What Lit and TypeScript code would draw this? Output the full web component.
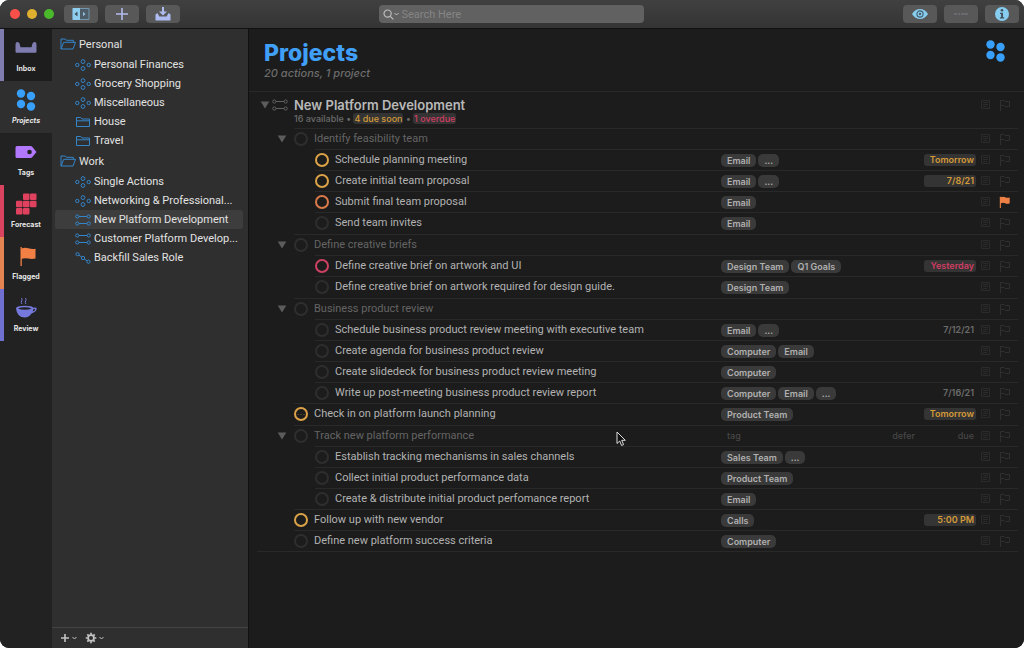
import { LitElement, html, css, svg, nothing } from "lit";
import { customElement, property } from "lit/decorators.js";

type Tone = "soon" | "late" | "";

interface Task {
  title: string;
  level: 1 | 2;
  group?: boolean;
  ring?: "amber" | "orange" | "red";
  tags?: string[];
  due?: string;
  tone?: Tone;
  flagged?: boolean;
  repeats?: boolean;
  hovered?: boolean;
}

const TASKS: Task[] = [
  { title: "Identify feasibility team", level: 1, group: true },
  { title: "Schedule planning meeting", level: 2, ring: "amber", tags: ["Email", "..."], due: "Tomorrow", tone: "soon" },
  { title: "Create initial team proposal", level: 2, ring: "amber", tags: ["Email", "..."], due: "7/8/21", tone: "soon" },
  { title: "Submit final team proposal", level: 2, ring: "orange", tags: ["Email"], flagged: true },
  { title: "Send team invites", level: 2, tags: ["Email"] },
  { title: "Define creative briefs", level: 1, group: true },
  { title: "Define creative brief on artwork and UI", level: 2, ring: "red", tags: ["Design Team", "Q1 Goals"], due: "Yesterday", tone: "late" },
  { title: "Define creative brief on artwork required for design guide.", level: 2, tags: ["Design Team"] },
  { title: "Business product review", level: 1, group: true },
  { title: "Schedule business product review meeting with executive team", level: 2, tags: ["Email", "..."], due: "7/12/21", tone: "" },
  { title: "Create agenda for business product review", level: 2, tags: ["Computer", "Email"] },
  { title: "Create slidedeck for business product review meeting", level: 2, tags: ["Computer"] },
  { title: "Write up post-meeting business product review report", level: 2, tags: ["Computer", "Email", "..."], due: "7/16/21", tone: "" },
  { title: "Check in on platform launch planning", level: 1, ring: "amber", repeats: true, tags: ["Product Team"], due: "Tomorrow", tone: "soon" },
  { title: "Track new platform performance", level: 1, group: true, hovered: true },
  { title: "Establish tracking mechanisms in sales channels", level: 2, tags: ["Sales Team", "..."] },
  { title: "Collect initial product performance data", level: 2, tags: ["Product Team"] },
  { title: "Create & distribute initial product perfomance report", level: 2, tags: ["Email"] },
  { title: "Follow up with new vendor", level: 1, ring: "amber", tags: ["Calls"], due: "5:00 PM", tone: "soon" },
  { title: "Define new platform success criteria", level: 1, tags: ["Computer"] },
];

const FOLDERS = [
  {
    name: "Personal",
    items: [
      ["single", "Personal Finances"],
      ["single", "Grocery Shopping"],
      ["single", "Miscellaneous"],
      ["folder", "House"],
      ["folder", "Travel"],
    ],
  },
  {
    name: "Work",
    items: [
      ["single", "Single Actions"],
      ["single", "Networking & Professional..."],
      ["parallel", "New Platform Development"],
      ["parallel", "Customer Platform Develop..."],
      ["sequential", "Backfill Sales Role"],
    ],
  },
];

const PERSPECTIVES = ["Inbox", "Projects", "Tags", "Forecast", "Flagged", "Review"];

const dots = svg`<circle cx="5.500" cy="4.500" r="4.200"/><circle cx="15.500" cy="7" r="4.200"/><circle cx="5.500" cy="15" r="4.200"/><circle cx="15.500" cy="17.500" r="4.200"/>`;

const railIcons: Record<string, unknown> = {
  Inbox: html`<svg width="22" height="22" viewBox="0 0 22 22" fill="#7f7db0"><path d="M.5 8q0-3 2-3 1.500 0 2 1.600l1 3.600h11l1-3.600q.5-1.600 2-1.600 2 0 2 3v6.500q0 1.200-1.200 1.200H1.700q-1.200 0-1.200-1.200z"/></svg>`,
  Projects: html`<svg width="22" height="22" viewBox="0 0 21 22" fill="#38a0fb">${dots}</svg>`,
  Tags: html`<svg width="22" height="22" viewBox="0 0 22 22" fill="#b178fb"><path fill-rule="evenodd" d="M2 5h13.500q1 0 1.700.7L21.500 11l-4.300 5.300q-.7.700-1.700.7H2Q.5 17 .5 15.500v-9Q.5 5 2 5zm12.500 3.700a2.300 2.300 0 1 0 0 4.600 2.300 2.300 0 0 0 0-4.600z"/></svg>`,
  Forecast: html`<svg width="22" height="22" viewBox="0 0 22 22" fill="#e0415f">${[[8, 0.5], [15, 0.5], [1, 7.7], [8, 7.7], [15, 7.7], [1, 15], [8, 15]].map(
    ([x, y]) => svg`<rect x=${x} y=${y} width="6.500" height="6.600" rx="1"/>`,
  )}</svg>`,
  Flagged: html`<svg width="22" height="22" viewBox="0 0 22 22" fill="#f28044"><path d="M5.500 2h1.300v19H5.500zM6.800 3.500q3-1.300 6.500-.2t7.200.5v9.800q-3.700.9-7.200 0t-6.500.2z"/></svg>`,
  Review: html`<svg width="22" height="22" viewBox="0 0 22 22" fill="#7579dc"><path fill-rule="evenodd" d="M1 11.500q0-2.800 8.800-2.800 8 0 8.500 2 3.600-.7 3.400 1.300-.3 2.600-5.200 4.600Q14 20.500 9.800 20.500 2 20.500 1 11.500zm2 .1q2.500 1.200 6.800 1.200t6.700-1.200q-2.200-1.300-6.700-1.300T3 11.600zm15.300.7-.6 2.300q2.600-1.300 2.600-2.200 0-.7-2-.1z"/><path d="M7 7Q5.600 5.500 6.600 4T6.500 1M11 7q-1.400-1.500-.4-3T10.500 1" fill="none" stroke="#7579dc"/></svg>`,
};

const folderIcon = html`<svg width="16" height="12" viewBox="0 0 16 12" class="line"><path d="M1.500 10.500v-9h4.200l1.200 1.500h7.600v7.500zM1.500 4.800h13"/></svg>`;
const openFolderIcon = html`<svg width="16" height="12" viewBox="0 0 16 12" class="line"><path d="M1 11V1h4.200l1.200 1.300h6.900v2M1 11 3.700 4.300h11.800L13 11z"/></svg>`;

const treeIcons: Record<string, unknown> = {
  folder: folderIcon,
  single: html`<svg width="16" height="12" viewBox="0 0 16 12" class="line"><circle cx="2.300" cy="6" r="1.700"/><circle cx="13.700" cy="6" r="1.700"/><circle cx="8" cy="2.600" r="1.900"/><circle cx="8" cy="9.500" r="1.900"/></svg>`,
  parallel: html`<svg width="16" height="12" viewBox="0 0 16 12" class="line"><circle cx="2.300" cy="2.500" r="1.600"/><circle cx="13.700" cy="2.500" r="1.600"/><circle cx="2.300" cy="9.500" r="1.600"/><circle cx="13.700" cy="9.500" r="1.600"/><path d="M4 2.500h8M4 9.500h8"/></svg>`,
  sequential: html`<svg width="16" height="12" viewBox="0 0 16 12" class="line"><circle cx="2.500" cy="2.200" r="1.600"/><circle cx="8" cy="6" r="1.700"/><circle cx="13.500" cy="9.700" r="1.600"/><path d="m3.900 3.100 2.700 1.900M9.400 7l2.700 1.800"/></svg>`,
};

const caret = html`<svg width="5" height="4" viewBox="0 0 5 4" fill="none" stroke="currentColor"><path d="M.5 1 2.500 3l2-2"/></svg>`;

const noteIcon = html`<svg width="10" height="10" viewBox="0 0 10 10" fill="none" stroke="#2b2b2b"><path d="M.5.500h8v8h-8zM2 2.500h5M2 4.500h5M2 6.500h4"/></svg>`;
const flagIcon = html`<svg width="12" height="12" viewBox="0 0 12 12" fill="none" stroke="#2f2f2f"><path d="M1.500 12V1.500h3.500l1 1h4.500v5H6l-1-1H1.500"/></svg>`;
const flagOnIcon = html`<svg width="12" height="12" viewBox="0 0 12 12" fill="#ee8045"><path d="M.8.800h1.100V12H.8zM1.900 1.200q2.200-.9 4.300.1t4.500.2v5.800q-2.400 1-4.500 0t-4.300 0z"/></svg>`;
const triangle = html`<svg width="10" height="8" viewBox="0 0 10 8" fill="#5c5c5c"><path d="M.7.500h8.600L5 7.500z"/></svg>`;

@customElement("app-toolbar")
export class AppToolbar extends LitElement {
  static styles = css`
    :host {
      display: grid;
      grid-template-columns: 1fr minmax(120px, 265px) 1fr;
      align-items: center;
      gap: 12px;
      height: 28px;
      padding: 0 5px 0 3px;
      background: linear-gradient(#404040, #343434);
      border-bottom: 1px solid #111111;
    }
    .side { display: flex; align-items: center; gap: 7px; }
    .right { justify-content: flex-end; }
    .lights { display: flex; gap: 7px; margin: 0 3px 0 7px; }
    .light { width: 10px; height: 10px; border-radius: 50%; }
    .close { background: #fb5049; }
    .min { background: #e0af2f; }
    .max { background: #4ab92c; }
    button {
      display: grid;
      place-items: center;
      width: 34px;
      height: 18px;
      padding: 0;
      border: 0;
      border-radius: 4px;
      background: #585858;
    }
    .search {
      display: flex;
      align-items: center;
      gap: 3px;
      height: 18px;
      padding: 0 4px;
      border-radius: 4px;
      background: #616161;
      color: #bdbdbd;
    }
    .glass { display: flex; align-items: center; }
    input {
      flex: 1;
      min-width: 0;
      padding: 0;
      border: 0;
      outline: 0;
      background: none;
      color: #dddddd;
      font: 11px "Roboto", sans-serif;
    }
    input::placeholder { color: #858585; opacity: 1; }
  `;

  render() {
    return html`
      <div class="side">
        <div class="lights">
          <span class="light close"></span><span class="light min"></span><span class="light max"></span>
        </div>
        <button aria-label="Toggle sidebar">
          <svg width="18" height="12" viewBox="0 0 18 12"><path d="M.5.500h16.500v11H.5z" fill="#4d5c68" stroke="#7197b1"/><path d="M1 0h7v12H1z" fill="#8fd0f0"/><path d="M5.500 3.500v5L2.500 6z" fill="#41505c"/><path d="M11 3.800v4.400L13.500 6z" fill="#8fc0dc"/></svg>
        </button>
        <button aria-label="New action">
          <svg width="14" height="14" viewBox="0 0 14 14" stroke="#b1bcee" stroke-width="1.600"><path d="M7 1v12M1 7h12"/></svg>
        </button>
        <button aria-label="Quick entry">
          <svg width="16" height="14" viewBox="0 0 16 14" fill="#aebcf2"><path d="M7 0h2v4.500h3L8 8.500 4 4.500h3z"/><path d="M.5 7.500 2.500 6l1.800 3.500h7.400L13.500 6l2 1.500v6H.5z"/></svg>
        </button>
      </div>
      <label class="search">
        <span class="glass">
          <svg width="11" height="11" viewBox="0 0 11 11" fill="none" stroke="currentColor" stroke-width="1.200"><circle cx="4.600" cy="4.600" r="3.600"/><path d="m7.300 7.300 3 3"/></svg>${caret}
        </span>
        <input type="search" placeholder="Search Here" aria-label="Search Here" />
      </label>
      <div class="side right">
        <button aria-label="View options">
          <svg width="16" height="12" viewBox="0 0 16 12"><path d="M0 6q3.200-5 8-5t8 5q-3.200 5-8 5T0 6z" fill="#86cdf0"/><circle cx="8" cy="6" r="3.100" fill="none" stroke="#48606e" stroke-width="1.200"/><circle cx="8" cy="6" r="1.200" fill="#48606e"/></svg>
        </button>
        <button aria-label="Clean up">
          <svg width="16" height="4" viewBox="0 0 16 4" stroke="#7b7b8b" stroke-width="1.200"><path d="M1 2h3M5 2h2M8 2h7"/></svg>
        </button>
        <button aria-label="Inspect">
          <svg width="14" height="14" viewBox="0 0 14 14"><circle cx="7" cy="7" r="7" fill="#86cdf0"/><circle cx="7" cy="3.300" r="1.300" fill="#42525e"/><path d="M5 5.800h3v4.400h1.200v1.300H4.900v-1.300h1.200V7H5z" fill="#42525e"/></svg>
        </button>
      </div>
    `;
  }
}

@customElement("perspective-rail")
export class PerspectiveRail extends LitElement {
  static styles = css`
    :host { display: block; background: #222222; }
    nav { display: flex; flex-direction: column; }
    .tile {
      display: flex;
      flex-direction: column;
      align-items: center;
      gap: 5px;
      height: 52px;
      padding: 8px 4px 0 0;
      box-sizing: border-box;
      border-left: 4px solid transparent;
      color: #e6e6e6;
      font-size: 7px;
      font-weight: 700;
      line-height: 10px;
      text-decoration: none;
    }
    svg { display: block; }
    .Inbox { border-left-color: #7f7db0; background: #1d1d1d; }
    .Projects { background: #2f2f2f; font-style: italic; }
    .Forecast { border-left-color: #d9435f; }
    .Flagged { border-left-color: #e48452; }
    .Review { border-left-color: #6f70cf; }
  `;

  render() {
    return html`<nav aria-label="Perspectives">
      ${PERSPECTIVES.map((name) => html`<a href="#${name}" class="tile ${name}">${railIcons[name]}<span>${name}</span></a>`)}
    </nav>`;
  }
}

@customElement("project-sidebar")
export class ProjectSidebar extends LitElement {
  static styles = css`
    :host {
      display: flex;
      flex-direction: column;
      background: #2f2f2f;
      color: #e2e2e2;
      font-family: "Roboto", sans-serif;
      font-size: 11px;
    }
    nav { flex: 1; padding: 4px 5px 0 3px; }
    ul { list-style: none; margin: 0; padding: 0; }
    a {
      display: flex;
      align-items: center;
      gap: 3px;
      height: 19px;
      padding-left: 20px;
      border-radius: 3px;
      color: inherit;
      text-decoration: none;
      white-space: nowrap;
    }
    .folder { height: 22px; padding-left: 5px; }
    .active { background: #3d3d3d; }
    .line { flex: none; fill: none; stroke: #3585c9; }
    footer {
      display: flex;
      align-items: center;
      gap: 8px;
      height: 19px;
      padding: 0 0 1px 8px;
      border-top: 1px solid #434343;
    }
    button {
      display: flex;
      align-items: center;
      gap: 2px;
      padding: 0;
      border: 0;
      background: none;
      color: #c4c4c4;
    }
  `;

  render() {
    return html`
      <nav aria-label="Folders and projects">
        <ul>
          ${FOLDERS.map(
            (folder) => html`<li>
              <a href="#" class="folder">${openFolderIcon}${folder.name}</a>
              <ul>
                ${folder.items.map(
                  ([kind, name]) => html`<li>
                    <a href="#" class=${name === "New Platform Development" ? "active" : ""}>${treeIcons[kind]}${name}</a>
                  </li>`,
                )}
              </ul>
            </li>`,
          )}
        </ul>
      </nav>
      <footer>
        <button aria-label="Add">
          <svg width="10" height="10" viewBox="0 0 10 10" stroke="currentColor" stroke-width="1.600"><path d="M5 1v8M1 5h8"/></svg>${caret}
        </button>
        <button aria-label="Actions">
          <svg width="12" height="12" viewBox="0 0 12 12" fill="none" stroke="currentColor"><circle cx="6" cy="6" r="2.900" stroke-width="1.700"/><path stroke-width="1.700" d="M6 .7v2M6 9.300v2M.7 6h2M9.300 6h2M2.300 2.300l1.300 1.300M8.400 8.400l1.300 1.300M2.300 9.700l1.300-1.300M8.400 3.600l1.300-1.300"/></svg>${caret}
        </button>
      </footer>
    `;
  }
}

@customElement("task-row")
export class TaskRow extends LitElement {
  @property({ attribute: false }) task!: Task;

  static styles = css`
    :host { display: block; }
    .row {
      display: grid;
      grid-template-columns: 15px 14px minmax(0, 1fr) 144px 50px 61px 20px 22px;
      grid-template-rows: 1px 20px;
      align-items: center;
      margin-left: 22px;
      line-height: 14px;
    }
    .level2 { margin-left: 43px; }
    .rule {
      grid-column: 2 / -1;
      grid-row: 1;
      height: 1px;
      background: #292929;
    }
    .row > :not(.rule) { grid-row: 2; }
    .fold {
      grid-column: 1;
      display: flex;
      padding: 0;
      border: 0;
      background: none;
      margin-left: -2px;
    }
    input {
      grid-column: 2;
      appearance: none;
      width: 14px;
      height: 14px;
      margin: 0;
      border: 2px solid #2e2e2e;
      border-radius: 50%;
    }
    .amber { border-color: #dba247; }
    .orange { border-color: #d97a48; }
    .red { border-color: #cf4163; }
    .repeats { background: radial-gradient(circle, #7a6238 1px, transparent 1px) center / 3px 3px repeat-x; }
    .title {
      grid-column: 3;
      padding-left: 6px;
      color: #b2b2b2;
      font-family: "Roboto", sans-serif;
      font-size: 11px;
      white-space: nowrap;
      overflow: hidden;
      text-overflow: ellipsis;
    }
    .group .title { color: #646464; }
    .tags { grid-column: 4; display: flex; gap: 2px; }
    .tag {
      padding: 0 6px;
      border-radius: 5px;
      background: #3a3a3a;
      color: #b0b0b0;
      font-size: 9px;
      font-weight: 600;
      line-height: 13px;
      white-space: nowrap;
    }
    .hint { color: #464646; font-size: 9px; font-weight: 500; text-align: right; }
    .tags .hint { padding-left: 6px; }
    .defer { grid-column: 5; }
    .due {
      grid-column: 6;
      margin-left: 9px;
      padding-right: 2px;
      border-radius: 3px;
      color: #6c6c6c;
      font-size: 9px;
      font-weight: 600;
      line-height: 12px;
      text-align: right;
    }
    .soon { background: #343434; color: #d39a38; }
    .late { background: #343434; color: #cf3d62; }
    .due.hint { color: #464646; font-weight: 500; }
    .note { grid-column: 7; justify-self: center; display: flex; }
    .flag { grid-column: 8; display: flex; padding-left: 3px; }
  `;

  render() {
    const t = this.task;
    return html`<div class="row level${t.level} ${t.group ? "group" : ""}">
      <span class="rule"></span>
      ${t.group ? html`<button class="fold" aria-label="Collapse ${t.title}">${triangle}</button>` : nothing}
      <input type="checkbox" id="done" class="${t.ring ?? ""} ${t.repeats ? "repeats" : ""}" />
      <label class="title" for="done">${t.title}</label>
      <div class="tags">
        ${t.hovered ? html`<span class="hint">tag</span>` : (t.tags ?? []).map((tag) => html`<span class="tag">${tag}</span>`)}
      </div>
      ${t.hovered ? html`<span class="defer hint">defer</span><span class="due hint">due</span>` : nothing}
      ${t.due ? html`<span class="due ${t.tone}">${t.due}</span>` : nothing}
      <span class="note">${noteIcon}</span>
      <span class="flag">${t.flagged ? flagOnIcon : flagIcon}</span>
    </div>`;
  }
}

@customElement("project-outline")
export class ProjectOutline extends LitElement {
  static styles = css`
    :host { display: block; background: #1c1c1c; border-left: 1px solid #111111; }
    header {
      display: flex;
      justify-content: space-between;
      height: 51px;
      padding: 11px 18px 0 15px;
      border-bottom: 1px solid #292929;
    }
    h1 { margin: 0; color: #409ff6; font-size: 23px; font-weight: 800; line-height: 26px; }
    .count { margin: 0; color: #6c6c6c; font-size: 11px; font-style: italic; font-weight: 500; line-height: 14px; }
    .outline { padding: 0 6px 0 8px; }
    .project {
      display: grid;
      grid-template-columns: 15px 22px minmax(0, 1fr) 20px 22px;
      align-items: center;
      padding: 5px 0 3px;
    }
    .fold { display: flex; padding: 0 0 0 3px; border: 0; background: none; }
    .kind { display: flex; }
    .line { fill: none; stroke: #606060; }
    h2 { margin: 0; color: #b9b9b9; font-size: 13px; font-weight: 600; line-height: 16px; }
    .summary { grid-column: 3 / -1; margin: 0; color: #6b6b6b; font-size: 9px; font-weight: 500; line-height: 12px; }
    .badge { padding: 0 1px; border-radius: 3px; background: #343434; }
    .soon { color: #d39a38; }
    .late { color: #cf3d62; }
    .note { display: flex; justify-self: center; }
    .flag { display: flex; padding-left: 3px; }
    ul { list-style: none; margin: 0; padding: 0; border-bottom: 1px solid #292929; }
    .new-group { margin-top: 1px; }
  `;

  render() {
    return html`
      <header>
        <div>
          <h1>Projects</h1>
          <p class="count">20 actions, 1 project</p>
        </div>
        <svg width="21" height="22" viewBox="0 0 21 22" fill="#38a0fb">${dots}</svg>
      </header>
      <section class="outline">
        <div class="project">
          <button class="fold" aria-label="Collapse New Platform Development">${triangle}</button>
          <span class="kind">${treeIcons.parallel}</span>
          <h2>New Platform Development</h2>
          <span class="note">${noteIcon}</span>
          <span class="flag">${flagIcon}</span>
          <p class="summary">
            16 available • <span class="badge soon">4 due soon</span> • <span class="badge late">1 overdue</span>
          </p>
        </div>
        <ul>
          ${TASKS.map(
            (task, i) => html`<li class=${task.group && i > 0 ? "new-group" : ""}><task-row .task=${task}></task-row></li>`,
          )}
        </ul>
      </section>
    `;
  }
}

@customElement("app-root")
export class AppRoot extends LitElement {
  static styles = css`
    :host {
      display: block;
      position: relative;
      height: 100vh;
      background: #ffffff;
      font-family: "Inter", sans-serif;
    }
    .window {
      display: grid;
      grid-template-rows: auto minmax(0, 1fr);
      height: 100%;
      border-radius: 9px;
      overflow: hidden;
      background: #1c1c1c;
    }
    .body {
      display: grid;
      grid-template-columns: 52px 196px minmax(0, 1fr);
    }
    .cursor { position: absolute; left: 616px; top: 431px; }
  `;

  render() {
    return html`
      <div class="window">
        <app-toolbar></app-toolbar>
        <main class="body">
          <perspective-rail></perspective-rail>
          <project-sidebar></project-sidebar>
          <project-outline></project-outline>
        </main>
      </div>
      <svg class="cursor" width="11" height="16" viewBox="0 0 11 16"><path d="M1 1v11.500l2.700-2.500 1.900 4.500 2-.9-1.900-4.300H9.300z" fill="#111111" stroke="#dddddd"/></svg>
    `;
  }
}
